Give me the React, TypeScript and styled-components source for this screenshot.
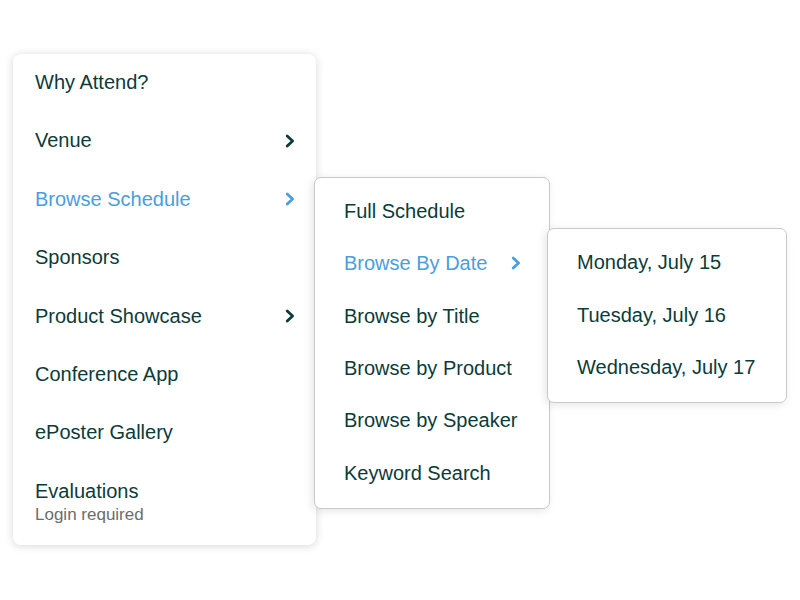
import styled, { createGlobalStyle } from "styled-components";

const GlobalStyle = createGlobalStyle`
  body {
    margin: 0;
    background: #ffffff;
    font-family: "Liberation Sans", Arial, sans-serif;
  }
`;

const Page = styled.div`
  width: 800px;
  height: 600px;
  padding: 54px 0 0 13px;
  box-sizing: border-box;
`;

const MainMenu = styled.ul`
  list-style: none;
  margin: 0;
  padding: 0 0 1px;
  width: 303px;
  box-sizing: border-box;
  background: #fff;
  border-radius: 8px;
  box-shadow: 0 1px 9px rgba(0, 0, 0, 0.16);
`;

const SubMenu = styled.ul<{ $width: number; $top: number }>`
  list-style: none;
  margin: 0;
  padding: 8px 0;
  position: absolute;
  left: calc(100% - 2px);
  top: ${(p) => p.$top}px;
  width: ${(p) => p.$width}px;
  box-sizing: border-box;
  background: #fff;
  border: 1px solid #c9c9c9;
  border-radius: 7px;
  box-shadow: -2px 2px 8px rgba(0, 0, 0, 0.1);
  z-index: 2;
`;

const Item = styled.li<{ $active?: boolean; $pad: number; $padY: number }>`
  position: relative;
  display: flex;
  align-items: center;
  justify-content: space-between;
  padding: ${(p) => p.$padY - 1}px ${(p) => p.$pad - 1}px ${(p) => p.$padY + 1}px
    ${(p) => p.$pad}px;
  font-size: 20px;
  line-height: 22.4px;
  color: ${(p) => (p.$active ? "#4b9edb" : "#0b3c38")};
`;

const Label = styled.div`
  display: flex;
  flex-direction: column;
`;

const Note = styled.span`
  margin-top: 3px;
  font-size: 17px;
  line-height: 20px;
  color: #6c6c6c;
`;

const Chevron = ({ color }: { color: string }) => (
  <svg width="10" height="14" viewBox="0 0 10 14">
    <path
      d="M2.2 2 L7.6 7 L2.2 12"
      fill="none"
      stroke={color}
      strokeWidth="2.8"
      strokeLinecap="round"
      strokeLinejoin="round"
    />
  </svg>
);

const DARK = "#0b3c38";
const BLUE = "#4b9edb";

export default function App() {
  return (
    <>
      <GlobalStyle />
      <Page>
        <MainMenu>
          <Item $pad={22} $padY={18}>Why Attend?</Item>
          <Item $pad={22} $padY={18}>
            Venue
            <Chevron color={DARK} />
          </Item>
          <Item $pad={22} $padY={18} $active>
            Browse Schedule
            <Chevron color={BLUE} />
            <SubMenu $width={236} $top={6}>
              <Item $pad={29} $padY={15}>Full Schedule</Item>
              <Item $pad={29} $padY={15} $active>
                Browse By Date
                <Chevron color={BLUE} />
                <SubMenu $width={240} $top={-10}>
                  <Item $pad={29} $padY={15}>Monday, July 15</Item>
                  <Item $pad={29} $padY={15}>Tuesday, July 16</Item>
                  <Item $pad={29} $padY={15}>Wednesday, July 17</Item>
                </SubMenu>
              </Item>
              <Item $pad={29} $padY={15}>Browse by Title</Item>
              <Item $pad={29} $padY={15}>Browse by Product</Item>
              <Item $pad={29} $padY={15}>Browse by Speaker</Item>
              <Item $pad={29} $padY={15}>Keyword Search</Item>
            </SubMenu>
          </Item>
          <Item $pad={22} $padY={18}>Sponsors</Item>
          <Item $pad={22} $padY={18}>
            Product Showcase
            <Chevron color={DARK} />
          </Item>
          <Item $pad={22} $padY={18}>Conference App</Item>
          <Item $pad={22} $padY={18}>ePoster Gallery</Item>
          <Item $pad={22} $padY={18}>
            <Label>
              Evaluations
              <Note>Login required</Note>
            </Label>
          </Item>
        </MainMenu>
      </Page>
    </>
  );
}
